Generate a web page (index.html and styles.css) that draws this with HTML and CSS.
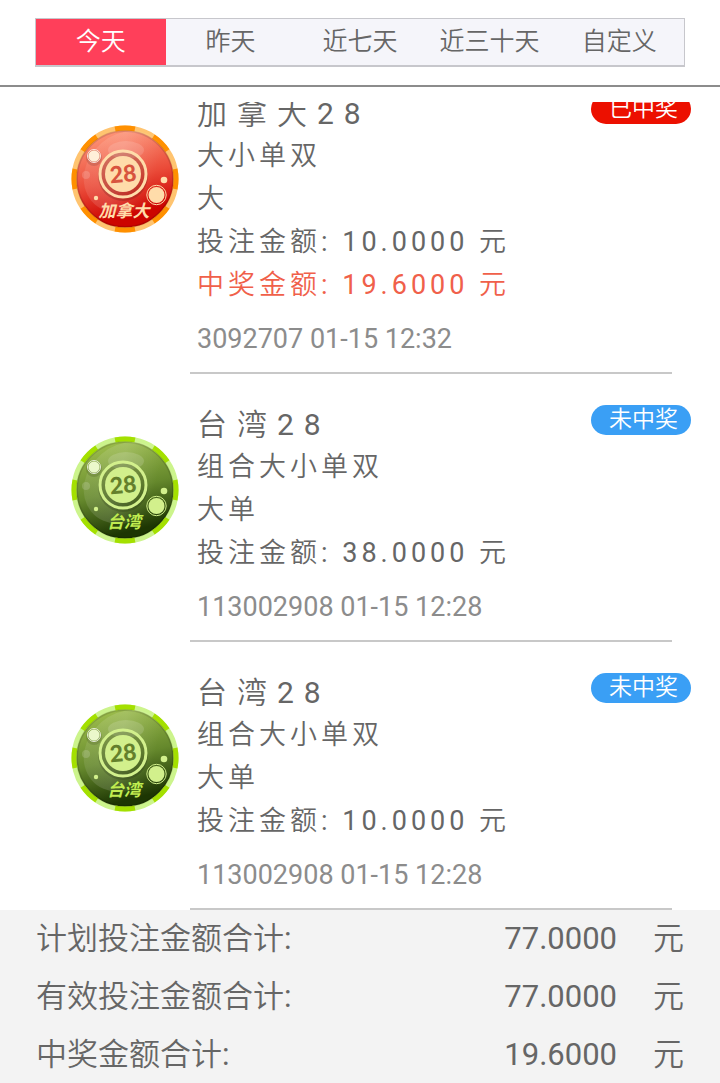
FILE: index.html
```
<!DOCTYPE html>
<html lang="zh-CN">

<head>
    <meta charset="UTF-8">
    <meta name="viewport" content="width=device-width, initial-scale=1.0">
    <title>投注记录</title>
    <link rel="stylesheet" href="styles.css">
</head>

<body>
    <svg class="defs" width="0" height="0" aria-hidden="true">
        <defs>
            <linearGradient id="red-ball" x1="0.35" y1="0" x2="0.6" y2="1">
                <stop offset="0" stop-color="#ff9a7c" />
                <stop offset="0.5" stop-color="#ea4a38" />
                <stop offset="0.85" stop-color="#cc0400" />
            </linearGradient>
            <linearGradient id="green-ball" x1="0.35" y1="0" x2="0.6" y2="1">
                <stop offset="0" stop-color="#a0c04e" />
                <stop offset="0.5" stop-color="#65882c" />
                <stop offset="0.9" stop-color="#1d3603" />
            </linearGradient>
            <linearGradient id="shine" x1="0.1" y1="0.1" x2="0.7" y2="0.8">
                <stop offset="0" stop-color="#fff" stop-opacity="0.08" />
                <stop offset="0.5" stop-color="#fff" stop-opacity="0.14" />
                <stop offset="1" stop-color="#fff" stop-opacity="0" />
            </linearGradient>
            <!-- shared parts of the ball, coloured by currentColor -->
            <g id="ball-parts">
                <circle cx="54" cy="54" r="48" fill="none" stroke="#000" stroke-width="2" opacity="0.12" />
                <ellipse cx="55" cy="47" rx="45" ry="38" fill="url(#shine)" transform="rotate(-40 55 47)" />
                <ellipse cx="55" cy="25" rx="18" ry="9" fill="#fff" opacity="0.14" />
                <circle cx="15" cy="50" r="4" fill="#fff" opacity="0.16" />
                <circle cx="52" cy="51" r="25" fill="#000" opacity="0.14" />
                <circle cx="52" cy="49" r="23" fill="none" stroke="currentColor" stroke-width="3" />
                <circle cx="52" cy="49" r="18" fill="currentColor" />
                <circle cx="23" cy="33" r="8" fill="#000" opacity="0.12" />
                <circle cx="23" cy="31" r="6.5" fill="none" stroke="#fff" opacity="0.8" />
                <circle cx="23" cy="31" r="5.5" fill="currentColor" />
                <circle cx="23" cy="31" r="5.5" fill="#fff" opacity="0.55" />
                <circle cx="93" cy="55" r="3.3" fill="currentColor" />
                <circle cx="25" cy="73" r="2.2" fill="currentColor" />
                <circle cx="85.5" cy="70" r="9.7" fill="none" stroke="currentColor" />
                <circle cx="85.5" cy="70" r="8" fill="currentColor" />
            </g>
        </defs>
    </svg>

    <header class="header">
        <nav class="tabs">
            <button class="tab active">今天</button>
            <button class="tab">昨天</button>
            <button class="tab">近七天</button>
            <button class="tab">近三十天</button>
            <button class="tab">自定义</button>
        </nav>
    </header>

    <main class="list">
        <div class="records">
            <article class="record">
                <svg class="ball red" viewBox="0 0 108 108" role="img" aria-label="加拿大28">
                    <circle cx="54" cy="54" r="51" fill="url(#red-ball)" />
                    <circle class="rim" cx="54" cy="54" r="51" />
                    <circle class="rim-dash" cx="54" cy="54" r="51" pathLength="360" />
                    <use href="#ball-parts" />
                    <text class="ball-num" x="52" y="57" transform="rotate(-5 52 49)">28</text>
                    <text class="ball-name" x="53" y="92">加拿大</text>
                </svg>
                <div class="info">
                    <h2 class="name">加拿大28</h2>
                    <p class="line">大小单双</p>
                    <p class="line">大</p>
                    <p class="line">投注金额: 10.0000 元</p>
                    <p class="line win">中奖金额: 19.6000 元</p>
                    <p class="date">3092707 01-15 12:32</p>
                </div>
                <span class="badge badge-win">已中奖</span>
            </article>

            <article class="record">
                <svg class="ball green" viewBox="0 0 108 108" role="img" aria-label="台湾28">
                    <circle cx="54" cy="54" r="51" fill="url(#green-ball)" />
                    <circle class="rim" cx="54" cy="54" r="51" />
                    <circle class="rim-dash" cx="54" cy="54" r="51" pathLength="360" />
                    <use href="#ball-parts" />
                    <text class="ball-num" x="52" y="57" transform="rotate(-5 52 49)">28</text>
                    <text class="ball-name" x="53" y="92">台湾</text>
                </svg>
                <div class="info">
                    <h2 class="name">台湾28</h2>
                    <p class="line">组合大小单双</p>
                    <p class="line">大单</p>
                    <p class="line">投注金额: 38.0000 元</p>
                    <p class="date">113002908 01-15 12:28</p>
                </div>
                <span class="badge">未中奖</span>
            </article>

            <article class="record">
                <svg class="ball green" viewBox="0 0 108 108" role="img" aria-label="台湾28">
                    <circle cx="54" cy="54" r="51" fill="url(#green-ball)" />
                    <circle class="rim" cx="54" cy="54" r="51" />
                    <circle class="rim-dash" cx="54" cy="54" r="51" pathLength="360" />
                    <use href="#ball-parts" />
                    <text class="ball-num" x="52" y="57" transform="rotate(-5 52 49)">28</text>
                    <text class="ball-name" x="53" y="92">台湾</text>
                </svg>
                <div class="info">
                    <h2 class="name">台湾28</h2>
                    <p class="line">组合大小单双</p>
                    <p class="line">大单</p>
                    <p class="line">投注金额: 10.0000 元</p>
                    <p class="date">113002908 01-15 12:28</p>
                </div>
                <span class="badge">未中奖</span>
            </article>
        </div>
    </main>

    <footer class="totals">
        <div class="total">
            <span class="total-label">计划投注金额合计:</span>
            <span>77.0000</span>
            <span>元</span>
        </div>
        <div class="total">
            <span class="total-label">有效投注金额合计:</span>
            <span>77.0000</span>
            <span>元</span>
        </div>
        <div class="total">
            <span class="total-label">中奖金额合计:</span>
            <span>19.6000</span>
            <span>元</span>
        </div>
    </footer>
</body>

</html>
```

FILE: styles.css
```
* {
    box-sizing: border-box;
}

body {
    font-family: Roboto, 'Noto Sans CJK SC DemiLight', 'Noto Sans CJK SC', sans-serif;
    background: #fff;
    color: #666;
    display: flex;
    flex-direction: column;
    height: 100vh;
    margin: 0;
}

h2,
p {
    margin: 0;
    font-weight: normal;
}

.defs {
    position: absolute;
}

.header {
    padding: 18px 35px;
    border-bottom: 2px solid #8c8c8c;
    margin-bottom: 15px;
}

.tabs {
    display: flex;
    height: 49px;
    border: 1px solid #c7c7cc;
    border-bottom-width: 2px;
    background: #f5f5fa;
}

.tab {
    flex: 1;
    padding: 0;
    border: none;
    background: none;
    color: #666;
    font-family: inherit;
    font-size: 25px;
    line-height: 44px;
    white-space: nowrap;
    cursor: pointer;
}

.tab.active {
    background: #ff3f5a;
    color: #fff;
}

.list {
    flex: 1;
    min-height: 0;
    display: flex;
    flex-direction: column-reverse;
    overflow-y: auto;
    scrollbar-width: none;
}

.record {
    position: relative;
    display: flex;
    align-items: flex-start;
    gap: 11px;
    padding: 0 48px 0 71px;
}

.info {
    flex: 1;
    padding: 29px 0 0 7px;
    border-bottom: 2px solid #c8c8c8;
}

.name {
    font-size: 30px;
    line-height: 43px;
    letter-spacing: 10px;
}

.line {
    font-size: 27px;
    line-height: 43px;
    letter-spacing: 4px;
}

.win {
    color: #f0604a;
}

.date {
    color: #8c8c8c;
    font-size: 27px;
    line-height: 65px;
}

.badge {
    position: absolute;
    top: 31px;
    right: 29px;
    padding: 0 13px 0 18px;
    border-radius: 15px;
    background: #3a9ff5;
    color: #fff;
    font-size: 23px;
    line-height: 30px;
}

.badge-win {
    background: #ec1000;
}

/* ball icons */
.ball {
    flex: none;
    width: 108px;
    height: 108px;
    margin-top: 62px;
}

.rim,
.rim-dash {
    fill: none;
    stroke-width: 5;
}

.rim-dash {
    stroke-dasharray: 22.5 22.5;
    stroke-dashoffset: 11.25;
}

.ball-num,
.ball-name {
    text-anchor: middle;
    font-weight: bold;
}

.ball-num {
    font-family: Lato, sans-serif;
    font-size: 23px;
    font-weight: 900;
}

.ball-name {
    fill: currentColor;
    font-family: 'Noto Sans CJK SC', sans-serif;
    font-size: 17px;
    font-style: italic;
}

.red {
    color: #ffdcaa;
}

.red .rim {
    stroke: #ffc470;
}

.red .rim-dash {
    stroke: #ff9000;
}

.red .ball-num {
    fill: #d8543e;
}

.green {
    color: #d2f08c;
}

.green .rim {
    stroke: #ccf48c;
}

.green .rim-dash {
    stroke: #a4e000;
}

.green .ball-num {
    fill: #64802c;
}

.green .ball-name {
    fill: #c0ec50;
}

.totals {
    display: flex;
    flex-direction: column;
    gap: 1px;
    padding: 0 36px;
    background: #f3f3f3;
    font-size: 31px;
    line-height: 57px;
}

.total {
    display: flex;
    gap: 36px;
}

.total-label {
    flex: 1;
}
```
